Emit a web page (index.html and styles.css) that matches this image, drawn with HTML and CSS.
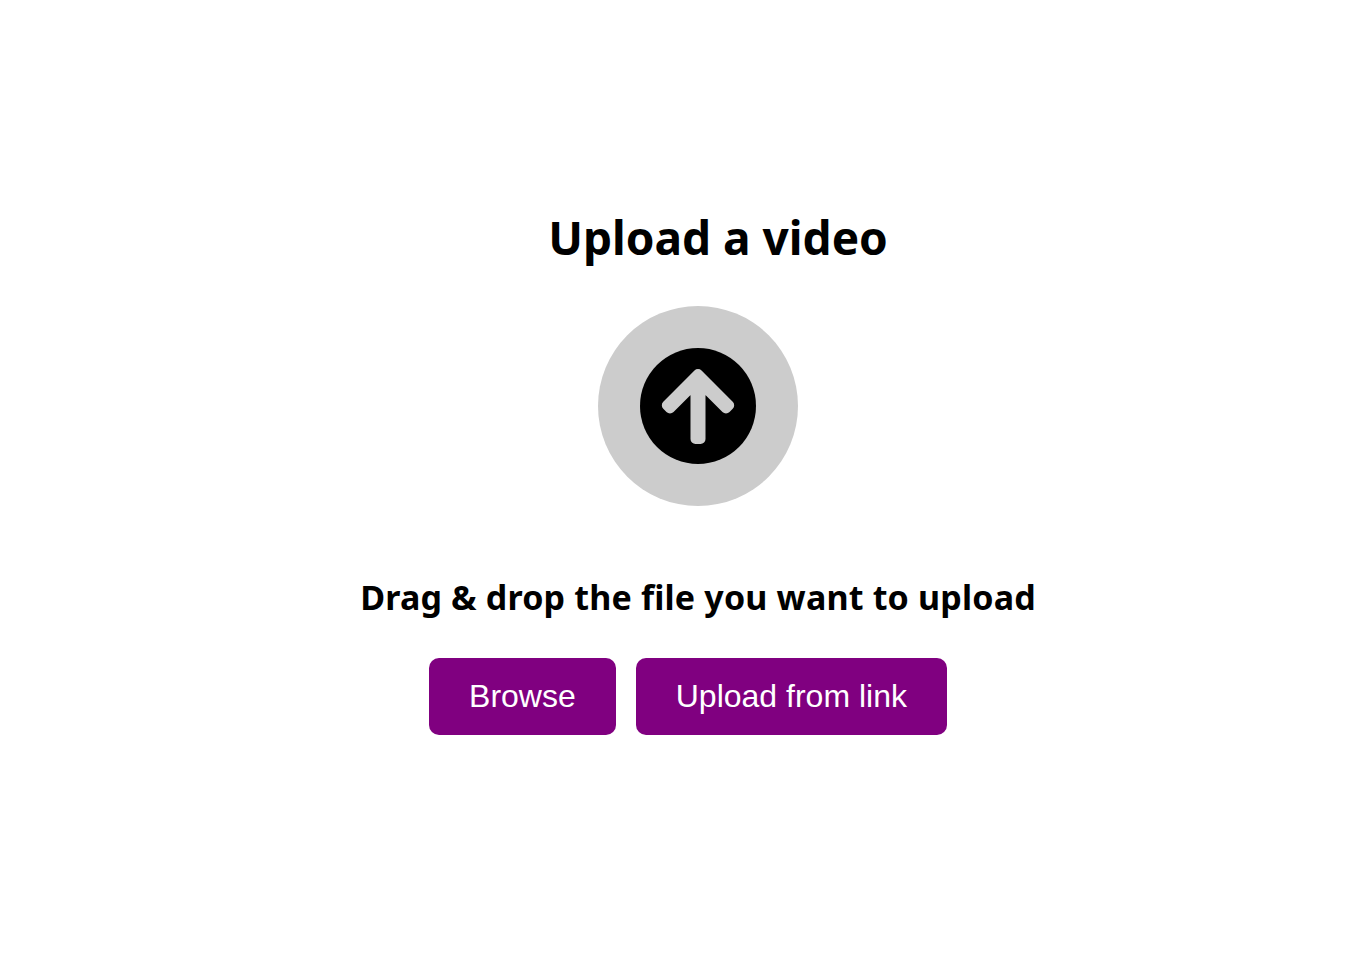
FILE: index.html
```html
<!DOCTYPE html>
<html lang="en">
<head>
<meta charset="utf-8">
<title>Upload a video</title>
<link rel="stylesheet" href="styles.css">
</head>
<body>
<main class="page">
  <h1 class="title">Upload a video</h1>
  <div class="disc">
    <svg class="arrow" viewBox="0 0 116 116" width="116" height="116" aria-hidden="true">
      <circle cx="58" cy="58" r="58" fill="#000"/>
      <path d="M55.5 91V34.93L30 60.43L26.82 57.25L58 26.07L89.18 57.25L86 60.43L60.5 34.93V91Z" fill="#ccc" stroke="#ccc" stroke-width="10" stroke-linejoin="round"/>
    </svg>
  </div>
  <h2 class="hint">Drag &amp; drop the file you want to upload</h2>
  <div class="actions">
    <button class="btn" type="button">Browse</button>
    <button class="btn" type="button">Upload from link</button>
  </div>
</main>
</body>
</html>
```
FILE: styles.css
```css
html, body { margin: 0; padding: 0; background: #fff; }
.page {
  width: 1361px;
  height: 953px;
  display: flex;
  flex-direction: column;
  align-items: center;
  padding: 208px 0 0 35px;
  box-sizing: border-box;
  font-family: "Noto Sans", sans-serif;
  color: #000;
}
.title { margin: -1px 0 0 40px; font-size: 46px; line-height: 60px; font-weight: 700; }
.disc {
  margin-top: 39px;
  width: 200px; height: 200px;
  border-radius: 50%;
  background: #ccc;
  display: flex; align-items: center; justify-content: center;
}
.arrow { display: block; }
.hint { margin: 69px 0 0; font-size: 34px; line-height: 44px; font-weight: 700; letter-spacing: 0.17px; }
.actions { display: flex; gap: 20px; margin-top: 39px; margin-right: 20px; }
.btn {
  height: 77px;
  padding: 0 40px;
  border: 0;
  border-radius: 10px;
  background: #800080;
  color: #fff;
  font-family: "Liberation Sans", Arial, sans-serif;
  font-size: 32px;
}
```
